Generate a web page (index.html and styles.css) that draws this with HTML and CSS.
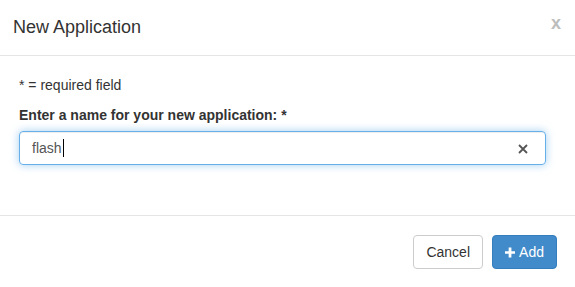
FILE: index.html
```html
<!DOCTYPE html>
<html lang="en">
<head>
    <title>New Application</title>
    <meta charset="UTF-8">
    <meta name="viewport" content="width=device-width, initial-scale=1.0">
    <link rel="stylesheet" href="styles.css">
</head>
<body>
    <div class="modal">
        <div class="modal-header">
            <h4 class="modal-title">New Application</h4>
            <span class="close">x</span>
        </div>
        <div class="modal-body">
            <p class="hint">* = required field</p>
            <label class="label" for="appname">Enter a name for your new application: *</label>
            <div class="input-wrap">
                <span class="field">flash<span class="caret"></span></span>
                <svg class="clear" width="10" height="10" viewBox="0 0 10 10">
                    <path d="M1 1 L9 9 M9 1 L1 9" stroke="#555" stroke-width="1.8" fill="none"/>
                </svg>
            </div>
        </div>
        <div class="modal-footer">
            <button class="btn btn-default">Cancel</button>
            <button class="btn btn-primary">
                <svg width="11" height="11" viewBox="0 0 11 11">
                    <path d="M5.5 0 V11 M0 5.5 H11" stroke="#fff" stroke-width="3" fill="none"/>
                </svg>
                Add
            </button>
        </div>
    </div>
</body>
</html>
```

FILE: styles.css
```css
* {
    box-sizing: border-box;
    margin: 0;
    padding: 0;
}

body {
    font-family: "Liberation Sans", Arial, sans-serif;
    font-size: 14px;
    line-height: 20px;
    color: #333;
    background: #fff;
}

.modal {
    width: 575px;
    height: 287px;
    background: #fff;
}

.modal-header {
    height: 56px;
    padding: 0 13px;
    border-bottom: 1px solid #e5e5e5;
    display: flex;
    align-items: center;
    justify-content: space-between;
}

.modal-title {
    font-size: 18px;
    font-weight: normal;
    line-height: 26px;
    margin-top: -2px;
}

.close {
    font-size: 18px;
    font-weight: bold;
    color: #bdbdbd;
    margin-right: 1px;
    margin-top: -10px;
}

.modal-body {
    height: 159px;
    padding: 19px 29px 0 19px;
}

.hint {
    margin-bottom: 10px;
}

.label {
    display: block;
    font-weight: bold;
    margin-bottom: 6px;
}

.input-wrap {
    height: 34px;
    width: 527px;
    border: 1px solid #66afe9;
    border-radius: 4px;
    box-shadow: inset 0 1px 1px rgba(0, 0, 0, .075), 0 0 8px rgba(102, 175, 233, .6);
    display: flex;
    align-items: center;
    justify-content: space-between;
    padding: 0 17px 0 12px;
}

.field {
    display: flex;
    align-items: center;
    color: #555;
}

.caret {
    display: inline-block;
    width: 1px;
    height: 18px;
    background: #000;
    margin-left: 1px;
}

.clear {
    margin-top: 1px;
}

.modal-footer {
    display: flex;
    justify-content: flex-end;
    gap: 9px;
    padding: 19px 18px 0 0;
    border-top: 1px solid #e5e5e5;
}

.btn {
    height: 34px;
    padding: 0 12px;
    border: 1px solid #ccc;
    border-radius: 4px;
    font-family: inherit;
    font-size: 14px;
    display: flex;
    align-items: center;
    gap: 4px;
}

.btn-default {
    background: #fff;
    color: #333;
}

.btn-primary {
    background: #428bca;
    border-color: #357ebd;
    color: #fff;
    width: 65px;
}
```
